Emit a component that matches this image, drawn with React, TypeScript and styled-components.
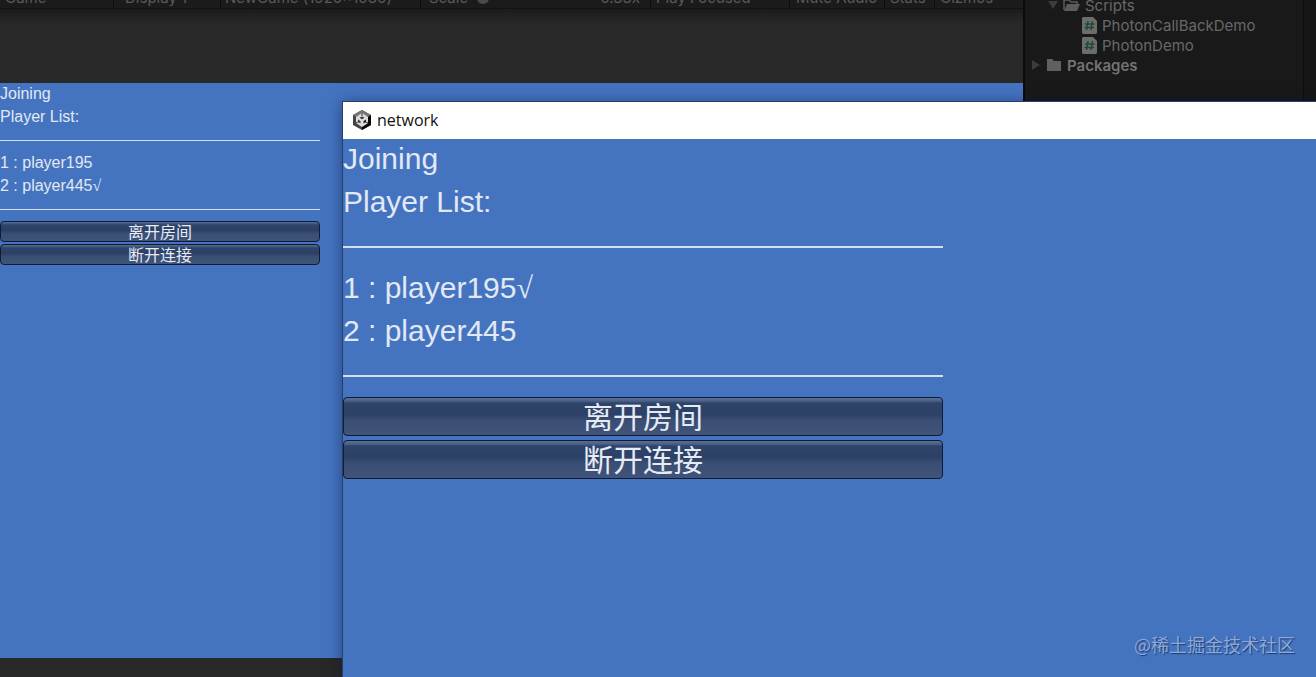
import React from "react";
import styled, { createGlobalStyle } from "styled-components";

const GlobalStyle = createGlobalStyle`
  * { box-sizing: border-box; }
  body {
    margin: 0;
    background: #191919;
    font-family: Inter, "Noto Sans CJK SC", sans-serif;
  }
`;

const Desktop = styled.div`
  position: relative;
  display: flex;
  min-height: 100vh;
  overflow: hidden;
`;

const GamePanel = styled.section`
  flex: 1;
  min-width: 0;
  display: flex;
  flex-direction: column;
  background: #282828;
`;

const Toolbar = styled.div`
  flex: none;
  display: flex;
  align-items: flex-end;
  height: 9px;
  overflow: hidden;
  background: #1b1b1b;
  border-bottom: 1px solid #121212;
`;

const ToolItem = styled.div<{ $width: number; $indent: number; $last?: boolean }>`
  flex: none;
  display: flex;
  align-items: center;
  width: ${(p) => p.$width}px;
  padding-left: ${(p) => p.$indent}px;
  border-right: 1px solid ${(p) => (p.$last ? "transparent" : "#0d0d0d")};
  color: #5a5a5a;
  font-size: 15px;
  line-height: 20px;
  white-space: nowrap;
`;

const Knob = styled.span`
  width: 12px;
  height: 12px;
  margin-left: 9px;
  border-radius: 50%;
  background: #4a4a4a;
`;

const ScaleValue = styled.span`
  margin-left: auto;
  padding-right: 10px;
`;

const Stage = styled.div`
  flex: 1;
  display: flex;
  padding: 74px 0 19px;
  background: linear-gradient(#1b1b1b, #282828 14px);
`;

const GameView = styled.div`
  flex: 1;
  background: #4474c0;
`;

const Gui = styled.div<{ $size: number; $width: number }>`
  width: ${(p) => p.$width}px;
  max-width: 100%;
  color: #e2e8f4;
  font-family: "Liberation Sans", "Noto Sans CJK SC", sans-serif;
  font-size: ${(p) => p.$size}px;
`;

const Line = styled.p<{ $height: number; $gap: number }>`
  height: ${(p) => p.$height + p.$gap}px;
  margin: 0;
  line-height: ${(p) => p.$height}px;
`;

const Check = styled.span`
  font-family: "Liberation Serif", serif;
`;

const Rule = styled.hr<{ $row: number; $thick: number }>`
  height: ${(p) => p.$thick}px;
  margin: ${(p) => Math.ceil((p.$row - p.$thick) / 2)}px 0 ${(p) => Math.floor((p.$row - p.$thick) / 2)}px;
  border: 0;
  background: #d5e0f3;
`;

const Actions = styled.div<{ $gap: number }>`
  display: flex;
  flex-direction: column;
  gap: ${(p) => p.$gap}px;
`;

const GuiButton = styled.button<{ $height: number; $sheen: number }>`
  height: ${(p) => p.$height}px;
  padding: 0 0 ${(p) => p.$sheen}px;
  border: 1px solid #101c36;
  border-radius: 4px;
  background: linear-gradient(
    #587096 0,
    #4a6189 ${(p) => p.$sheen - 1}px,
    #2f4469 ${(p) => p.$sheen + 1}px,
    #2d4167 45%,
    #3a4e74 60%,
    #40547a 100%
  );
  color: #e6ebf5;
  font-family: "Noto Sans CJK SC", sans-serif;
  font-size: inherit;
  line-height: 1;
`;

const Project = styled.aside`
  flex: none;
  display: flex;
  width: 293px;
  border-left: 2px solid #0b0b0b;
  background: #191919;
`;

const Tree = styled.ul`
  flex: 1;
  margin: -5px 0 0;
  padding: 0;
  list-style: none;
`;

const TreeRow = styled.li<{ $indent: number; $bold?: boolean }>`
  display: flex;
  align-items: center;
  gap: 5px;
  height: 20px;
  padding-left: ${(p) => p.$indent}px;
  color: ${(p) => (p.$bold ? "#737373" : "#686868")};
  font-size: 15px;
  font-weight: ${(p) => (p.$bold ? 600 : 400)};
  white-space: nowrap;

  svg { flex: none; }
`;

const ScrollTrack = styled.div`
  width: 13px;
  border-left: 1px solid #0d0d0d;
  background: #161616;
`;

const Window = styled.section`
  position: absolute;
  inset: 101px 0 0 342px;
  border: solid #2a3f68;
  border-width: 1px 0 0 1px;
  background: #4474c0;
  box-shadow: 0 2px 14px rgba(10, 20, 60, 0.5);
`;

const TitleBar = styled.header`
  display: flex;
  align-items: center;
  gap: 5px;
  height: 37px;
  padding: 0 9px 1px;
  background: #fff;
  color: #111;
  font-family: "Open Sans", sans-serif;
  font-size: 16px;
`;

const Watermark = styled.div`
  position: absolute;
  right: 21px;
  bottom: 19px;
  color: #8fa9d4;
  font-family: "Noto Sans CJK SC", sans-serif;
  font-size: 18px;
  line-height: 27px;
  text-shadow: 1px 1px 1px #1c3b78;
`;

const Arrow = ({ open }: { open?: boolean }) => (
  <svg width="10" height="10" viewBox="0 0 10 10" fill="#3c3c3c">
    <path d={open ? "M0 1h10L5 9z" : "M1 0v10l8-5z"} />
  </svg>
);

const OpenFolder = () => (
  <svg width="17" height="14" viewBox="0 0 17 14">
    <path d="M1 12V2h5l2 2h6v3" fill="none" stroke="#5c5c5c" strokeWidth="1.5" />
    <path d="M4 6h13l-3 7H1z" fill="#5c5c5c" />
  </svg>
);

const Folder = () => (
  <svg width="16" height="12" viewBox="0 0 16 12" fill="#606060">
    <path d="M1 0h5l2 2h7v10H1z" />
  </svg>
);

const ScriptIcon = () => (
  <svg width="15" height="17" viewBox="0 0 15 17">
    <path d="M1 0h10l4 4v12l-1 1H1l-1-1V1z" fill="#6b6e6b" />
    <path d="M6 4L4.600 13M10.400 4L9 13M3 7h9.500M2.500 10.500H12" stroke="#1f4a3a" strokeWidth="1.500" fill="none" />
  </svg>
);

const AppIcon = () => (
  <svg width="20" height="20" viewBox="0 0 20 20">
    <path d="M10 0l9 5v10l-9 5-9-5V5z" fill="#444" />
    <path d="M10 0l9 5-3 2-6-3-6 3-3-2z" fill="#777" />
    <path d="M19 5v10l-9 5v-3l6-4V7z" fill="#080808" />
    <path d="M10 3l6 4v6l-6 4-6-4V7z" fill="#dcdcdc" />
    <path d="M10 3v3M4 13l3-1.500M16 13l-3-1.500" stroke="#555" strokeWidth="1.200" />
    <path d="M10 6.500l2.400 1.300L10 9.200 7.600 7.800z" fill="#333" />
    <path d="M6 9.500l2.500 1.500v2.500L6 12z" fill="#444" />
    <path d="M14 9.500L11.500 11v2.500L14 12z" fill="#222" />
  </svg>
);

interface Player {
  name: string;
  self?: boolean;
}

interface RoomProps {
  players: Player[];
  large?: boolean;
}

const Room = ({ players, large }: RoomProps) => {
  const height = large ? 39 : 21;
  const gap = large ? 4 : 2;
  const thick = large ? 2 : 1;
  const row = height + gap;
  return (
    <Gui $size={large ? 30 : 16} $width={large ? 600 : 320}>
      <Line $height={height} $gap={gap}>Joining</Line>
      <Line $height={height} $gap={gap}>Player List:</Line>
      <Rule $row={row} $thick={thick} />
      {players.map((p, i) => (
        <Line key={p.name} $height={height} $gap={gap}>
          {`${i + 1} : ${p.name}`}
          {p.self && <Check>√</Check>}
        </Line>
      ))}
      <Rule $row={row} $thick={thick} />
      <Actions $gap={gap}>
        <GuiButton type="button" $height={height} $sheen={gap}>离开房间</GuiButton>
        <GuiButton type="button" $height={height} $sheen={gap}>断开连接</GuiButton>
      </Actions>
    </Gui>
  );
};

export default function App() {
  return (
    <>
      <GlobalStyle />
      <Desktop>
        <GamePanel>
          <Toolbar>
            <ToolItem $width={114} $indent={5}>Game</ToolItem>
            <ToolItem $width={107} $indent={11}>Display 1</ToolItem>
            <ToolItem $width={200} $indent={4}>NewGame (1920x1080)</ToolItem>
            <ToolItem $width={230} $indent={8}>
              Scale
              <Knob />
              <ScaleValue>0.33x</ScaleValue>
            </ToolItem>
            <ToolItem $width={139} $indent={5}>Play Focused</ToolItem>
            <ToolItem $width={95} $indent={6}>Mute Audio</ToolItem>
            <ToolItem $width={50} $indent={5}>Stats</ToolItem>
            <ToolItem $width={88} $indent={5} $last>Gizmos</ToolItem>
          </Toolbar>
          <Stage>
            <GameView>
              <Room players={[{ name: "player195" }, { name: "player445", self: true }]} />
            </GameView>
          </Stage>
        </GamePanel>
        <Project>
          <Tree>
            <TreeRow $indent={23}><Arrow open /><OpenFolder />Scripts</TreeRow>
            <TreeRow $indent={57}><ScriptIcon />PhotonCallBackDemo</TreeRow>
            <TreeRow $indent={57}><ScriptIcon />PhotonDemo</TreeRow>
            <TreeRow $indent={6} $bold><Arrow /><Folder />Packages</TreeRow>
          </Tree>
          <ScrollTrack />
        </Project>
        <Window>
          <TitleBar><AppIcon />network</TitleBar>
          <Room large players={[{ name: "player195", self: true }, { name: "player445" }]} />
          <Watermark>@稀土掘金技术社区</Watermark>
        </Window>
      </Desktop>
    </>
  );
}
